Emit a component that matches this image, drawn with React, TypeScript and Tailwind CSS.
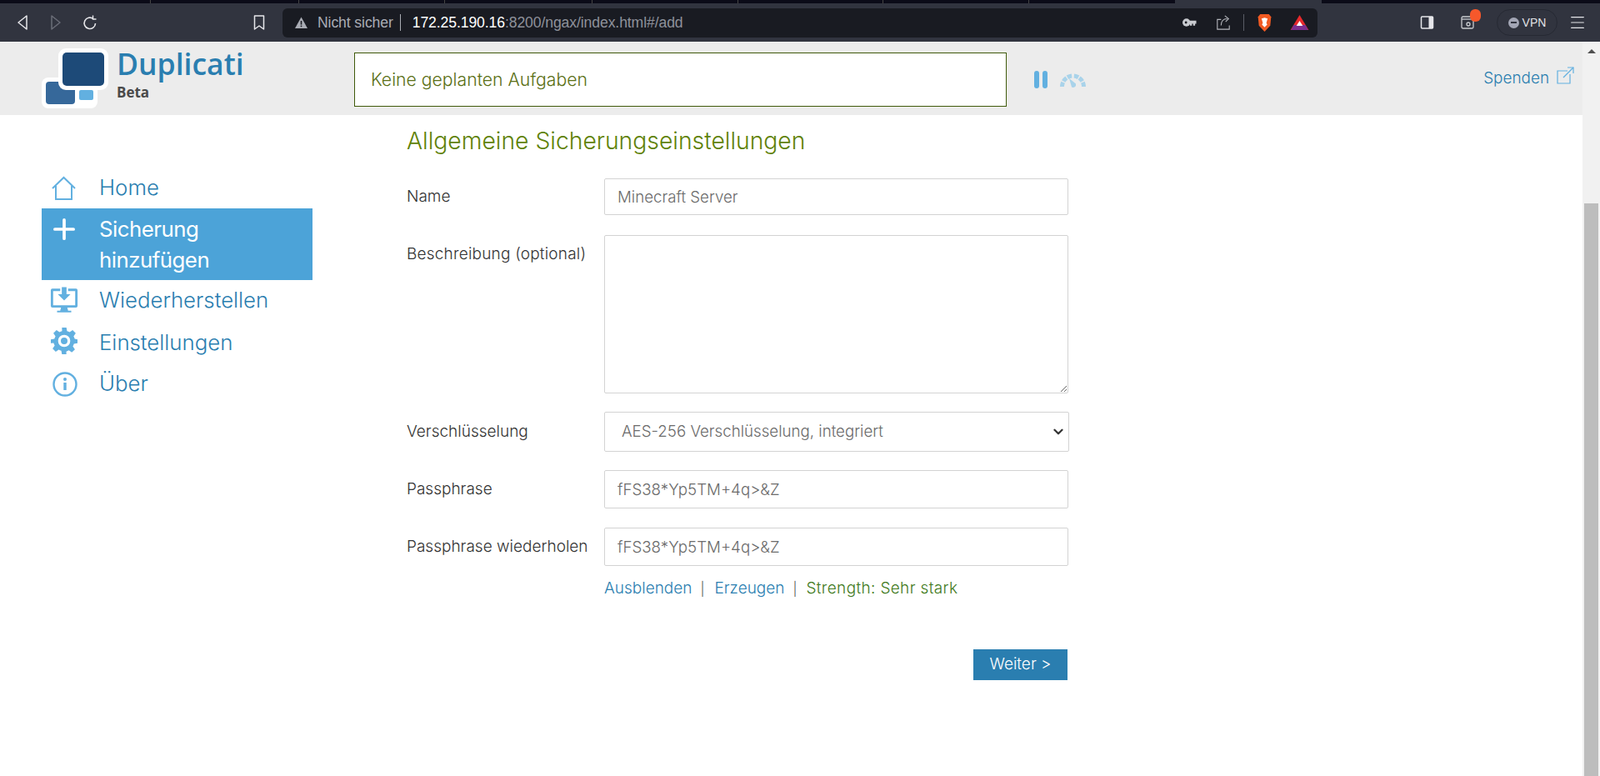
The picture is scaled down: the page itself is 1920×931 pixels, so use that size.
import { ChevronDown, Menu } from 'lucide-react';

function BrowserBar() {
    return (
        <div className="h-[50px] shrink-0 bg-[#31343f] flex flex-col font-['Liberation_Sans',sans-serif]">
            <div className="h-1 bg-[#0b0b18] flex">
                <div className="w-[181px] border-r border-[#444]" />
                <div className="w-[178px] border-r border-[#444]" />
                <div className="w-[175px] border-r border-[#444]" />
                <div className="w-[177px] border-r border-[#444]" />
                <div className="w-[175px] border-r border-[#444]" />
                <div className="w-[174px] border-r border-[#444]" />
                <div className="w-[175px] border-r border-[#444]" />
                <div className="w-[175px]" />
                <div className="w-[176px] bg-[#31343f]" />
                <div className="flex-1" />
            </div>
            <div className="flex-1 flex items-center">
                <div className="w-[304px] pl-[20px] flex items-center shrink-0">
                    <svg width="14" height="20" viewBox="0 0 14 20" fill="none" stroke="#e6e6ea" strokeWidth="1.5"><path d="M12 2 2 10l10 8z" strokeLinejoin="round" /></svg>
                    <svg width="14" height="20" viewBox="0 0 14 20" fill="none" stroke="#6a6d78" strokeWidth="1.5" className="ml-[26px]"><path d="m2 2 10 8-10 8z" strokeLinejoin="round" /></svg>
                    <svg width="18" height="20" viewBox="0 0 18 20" fill="none" stroke="#e6e6ea" strokeWidth="1.6" className="ml-[25px]"><path d="M15.500 11a6.700 6.700 0 1 1-2.500-5.400" /><path d="M12.500 1.500v4.500h4" strokeWidth="1.4" /></svg>
                </div>
                <svg width="14" height="20" viewBox="0 0 14 20" fill="none" stroke="#e6e6ea" strokeWidth="1.5" className="shrink-0"><path d="M1.500 2h11v16l-5.500-4-5.500 4z" strokeLinejoin="round" /></svg>
                <div className="ml-[21px] w-[1242px] h-[35px] rounded-[6px] bg-[#191b22] flex items-center pl-[14px] pr-[10px] text-[17.6px] tracking-[-0.1px] shrink-0">
                    <svg width="17" height="15" viewBox="0 0 16 15" fill="#a9acb4" className="shrink-0"><path d="M8 .5 15.500 14H.5z" /><rect x="7.200" y="5" width="1.600" height="4.600" fill="#191b22" /><rect x="7.200" y="10.600" width="1.600" height="1.600" fill="#191b22" /></svg>
                    <span className="ml-[11px] text-[#a9acb4]">Nicht sicher</span>
                    <span className="ml-[8px] mr-[14px] h-[20px] w-px bg-[#a9acb4]" />
                    <span className="text-white">172.25.190.16</span>
                    <span className="text-[#8e919a]">:8200/ngax/index.html#/add</span>
                    <div className="ml-auto flex items-center">
                        <svg width="17" height="12" viewBox="0 0 18 12" fill="#c9cbd0"><circle cx="5" cy="6" r="5" /><circle cx="4.400" cy="6" r="1.500" fill="#191b22" /><path d="M8 3.500h9.500v4H16V10h-2.500V7.500H12V10H9.500V7.500H8z" /></svg>
                        <svg width="18" height="20" viewBox="0 0 20 20" fill="none" stroke="#b5b7bd" strokeWidth="1.200" className="ml-[23px]"><path d="M7 6H2v13h16v-5" /><path d="M7 14c0-6 3-9 8-9" /><path d="m12 1 5 4-4 4" /></svg>
                        <span className="ml-[15px] h-[20px] w-px bg-[#5a5d66]" />
                        <svg width="21" height="23" viewBox="0 0 16 22" className="ml-[14px]"><path d="M3 1h10l2.500 3-1 10-6.500 7-6.500-7-1-10z" fill="#f15a22" /><path d="M4.500 6 8 5l3.500 1-1.500 5 1 2-3 3-3-3 1-2z" fill="#fff" /></svg>
                        <svg width="23" height="20" viewBox="0 0 18 20" className="ml-[20px]" preserveAspectRatio="none"><path d="M9 1 17.500 19H.500z" fill="#e8292c" /><path d="M3.500 13h11l2.500 6H1z" fill="#7b2f8e" /><path d="M9 8l3 6H6z" fill="#fff" /></svg>
                    </div>
                </div>
                <svg width="17" height="16" viewBox="0 0 16 16" className="ml-[123px] shrink-0"><rect x="1" y="1" width="14" height="14" rx="1" fill="none" stroke="#e6e6ea" strokeWidth="1.500" /><rect x="10" y="1" width="5" height="14" fill="#e6e6ea" /></svg>
                <div className="relative ml-[32px] w-[17px] h-[16px] shrink-0">
                    <svg width="17" height="16" viewBox="0 0 17 16" fill="none" stroke="#c9cbd0" strokeWidth="1.300"><rect x="1" y="1" width="14" height="14" rx="1.500" /><path d="M1 4h14" /><circle cx="9" cy="10" r="2" /></svg>
                    <span className="absolute left-[11px] top-[-8px] w-[13px] h-[15px] rounded-[6px] bg-[#f6582b]" />
                </div>
                <div className="ml-[26px] w-[73px] h-[32px] rounded-full border border-[#262933] flex items-center justify-center gap-[4px] shrink-0 text-[14px] text-[#e0e1e5]">
                    <span className="w-[13px] h-[13px] rounded-full bg-[#a3a6b5] flex items-center justify-center"><span className="w-[7px] h-[2px] bg-[#31343f]" /></span>
                    VPN
                </div>
                <Menu size={22} strokeWidth={1.300} color="#e6e6ea" className="ml-[13px] shrink-0" />
            </div>
        </div>
    );
}

function Logo() {
    return (
        <svg width="82" height="72" viewBox="0 0 82 72" className="shrink-0">
            <rect x="0" y="35" width="67" height="37" rx="8" fill="#fff" />
            <rect x="5" y="40" width="35" height="27" rx="4" fill="#36689a" />
            <rect x="45" y="50" width="17" height="12" rx="2" fill="#62b0e0" />
            <rect x="20" y="0" width="60" height="50" rx="9" fill="#fff" />
            <rect x="25" y="5" width="50" height="40" rx="5" fill="#1d4a78" />
        </svg>
    );
}

function Header() {
    return (
        <header className="h-[88px] bg-[#ececec] flex items-start pl-[50px] pr-[10px] shrink-0">
            <div className="mt-[8px] w-[82px]"><Logo /></div>
            <div className="ml-[8px] mt-[2px] w-[285px] font-['Open_Sans',sans-serif]">
                <div className="text-[35.5px] leading-[48px] font-semibold text-[#2a7eb0]">Duplicati</div>
                <div className="text-[17px] leading-[18px] mt-[2px] font-bold text-[#4a4a4a]">Beta</div>
            </div>
            <div className="mt-[13px] w-[783px] h-[65px] bg-white border border-[#3f5a0a] flex items-center pl-[19px] text-[21.2px] font-light text-[#5a6f14]">
                Keine geplanten Aufgaben
            </div>
            <div className="mt-[35px] ml-[33px] flex items-start">
                <span className="w-[6px] h-[21px] rounded-full bg-[#62b0e0]" />
                <span className="w-[6px] h-[21px] rounded-full bg-[#62b0e0] ml-[4px]" />
                <svg width="33" height="20" viewBox="0 0 33 20" className="ml-[14px] mt-[1px]" fill="none" stroke="#a9d3ea" strokeWidth="5">
                    <path d="M3.500 18A13 13 0 0 1 4.620 12.710" />
                    <path d="M5.240 11.500A13 13 0 0 1 8.860 7.480" />
                    <path d="M10 6.740A13 13 0 0 1 15.140 5.070" />
                    <path d="M17.860 5.070A13 13 0 0 1 23 6.740" />
                    <path d="M24.140 7.480A13 13 0 0 1 27.760 11.500" />
                    <path d="M28.380 12.710A13 13 0 0 1 29.500 18" />
                    <path d="M12 8l8 6.500a3.500 3.500 0 0 1-5 4z" fill="#a9d3ea" stroke="none" />
                </svg>
            </div>
            <div className="ml-auto mt-[30px] flex items-start text-[18.9px] leading-[28px] font-light text-[#2a7eb0]">
                Spenden
                <svg width="21" height="21" viewBox="0 0 21 21" fill="none" stroke="#62b0e0" strokeWidth="1.200" className="ml-[9px]"><path d="M13 5H1v15h15V9" /><path d="M13 1h7v7" /><path d="M20 1 8 13" /></svg>
            </div>
        </header>
    );
}

const navClass = 'flex items-start text-[#2a7eb0] text-[25.800px] leading-[37px] font-light';

function Sidebar() {
    return (
        <nav className="w-[325px] ml-[50px] mt-[67px] shrink-0">
            <a className={`${navClass} h-[45px] pt-[1px] pl-[12px]`}>
                <svg width="29" height="30" viewBox="0 0 29 30" fill="none" stroke="#62b0e0" strokeWidth="2" className="mt-[5px] shrink-0"><path d="M1 15 14.500 2 28 15" /><path d="M5 12v16h19V12" /></svg>
                <span className="ml-[28px]">Home</span>
            </a>
            <a className={`${navClass} bg-[#4ca3d8] text-white h-[86px] pt-[6px] pl-[14px] font-normal`}>
                <svg width="26" height="26" viewBox="0 0 28 28" fill="none" stroke="#fff" strokeWidth="4" strokeLinecap="round" className="mt-[6px] shrink-0"><path d="M14 2v24M2 14h24" /></svg>
                <span className="ml-[29px] tracking-[-0.5px]">Sicherung<br />hinzufügen</span>
            </a>
            <a className={`${navClass} h-[50px] pt-[5px] pl-[10px]`}>
                <svg width="34" height="33" viewBox="0 0 36 34" className="mt-[3px] mr-[25px] shrink-0"><path d="M13 2H3a2 2 0 0 0-2 2v20a2 2 0 0 0 2 2h30a2 2 0 0 0 2-2V4a2 2 0 0 0-2-2H23v3h9v18H4V5h9z" fill="#62b0e0" /><path d="M15 0h6v9h5l-8 8-8-8h5z" fill="#62b0e0" /><path d="M14 26h8l1 4h4v2H9v-2h4z" fill="#62b0e0" /></svg>
                <span>Wiederherstellen</span>
            </a>
            <a className={`${navClass} h-[49px] pt-[6px] pl-[11px]`}>
                <svg width="32" height="32" viewBox="0 0 24 24" fill="#62b0e0" className="mt-[1px] shrink-0"><path fillRule="evenodd" d="M10 0h4l.6 3.200a9 9 0 0 1 2.300 1l2.700-1.900 2.800 2.800-1.900 2.700a9 9 0 0 1 1 2.300L24 10.700v3.300l-3.200.6a9 9 0 0 1-1 2.300l1.900 2.700-2.800 2.800-2.700-1.900a9 9 0 0 1-2.300 1L14 24h-4l-.6-3.200a9 9 0 0 1-2.300-1l-2.700 1.900-2.800-2.800 1.900-2.700a9 9 0 0 1-1-2.300L0 14v-3.300l3.200-.6a9 9 0 0 1 1-2.300L2.300 5.100l2.800-2.800 2.700 1.900a9 9 0 0 1 2.300-1zM12 6.500a5.500 5.500 0 1 0 0 11 5.500 5.500 0 0 0 0-11zm0 2.500a3 3 0 1 1 0 6 3 3 0 0 1 0-6z" /></svg>
                <span className="ml-[26px]">Einstellungen</span>
            </a>
            <a className={`${navClass} h-[49px] pt-[6px] pl-[13px]`}>
                <svg width="30" height="30" viewBox="0 0 30 30" fill="none" className="mt-[5px] shrink-0"><circle cx="15" cy="15" r="13.500" stroke="#62b0e0" strokeWidth="2.400" /><circle cx="15" cy="9" r="2" fill="#62b0e0" /><path d="M15 13v9" stroke="#62b0e0" strokeWidth="3.400" /></svg>
                <span className="ml-[26px]">Über</span>
            </a>
        </nav>
    );
}

const inputClass = 'w-[557px] bg-white border border-[#d3d3d3] rounded-[2px] px-[15px] text-[18.700px] text-[#6b6b6b] font-light outline-none';
const labelClass = 'w-[237px] shrink-0 text-[19px] font-light text-[#333333]';

function Form() {
    return (
        <section className="ml-[113px] w-[800px] shrink-0">
            <h2 className="mt-[12px] text-[28.300px] leading-[38px] font-light text-[#5f8208]">Allgemeine Sicherungseinstellungen</h2>
            <div className="flex items-center mt-[26px]">
                <label className={`${labelClass} pt-[1px]`}>Name</label>
                <input readOnly value="Minecraft Server" className={`${inputClass} h-[44px]`} />
            </div>
            <div className="flex items-start mt-[24px]">
                <label className={`${labelClass} pt-[9px] tracking-[0.2px]`}>Beschreibung (optional)</label>
                <textarea readOnly className={`${inputClass} h-[190px] block`} />
            </div>
            <div className="flex items-center mt-[22px]">
                <label className={labelClass}>Verschlüsselung</label>
                <div className="relative">
                    <select className={`${inputClass} appearance-none pl-[20px] h-[48px] w-[558px] block`} defaultValue="aes">
                        <option value="aes">AES-256 Verschlüsselung, integriert</option>
                    </select>
                    <ChevronDown size={18} strokeWidth={3} color="#333333" className="absolute right-[4px] top-[15px]" />
                </div>
            </div>
            <div className="flex items-center mt-[22px]">
                <label className={labelClass}>Passphrase</label>
                <input readOnly value="fFS38*Yp5TM+4q>&Z" className={`${inputClass} h-[46px]`} />
            </div>
            <div className="flex items-center mt-[23px]">
                <label className={labelClass}>Passphrase wiederholen</label>
                <input readOnly value="fFS38*Yp5TM+4q>&Z" className={`${inputClass} h-[46px]`} />
            </div>
            <div className="ml-[237px] mt-[15px] text-[19px] font-light leading-[24px] text-[#4a4a4a]">
                <a className="text-[#2a7eb0]">Ausblenden</a>
                <span className="ml-[10px] mr-[12px] text-[16px]">|</span>
                <a className="text-[#2a7eb0]">Erzeugen</a>
                <span className="ml-[10px] mr-[11px] text-[16px]">|</span>
                <span className="text-[#3f7a1c] tracking-[0.35px]">Strength: Sehr stark</span>
            </div>
            <div className="w-[793px] flex justify-end mt-[61px]">
                <button className="w-[113px] h-[37px] bg-[#2a7eb0] text-white text-[19px] font-light">Weiter &gt;</button>
            </div>
        </section>
    );
}

function Scrollbar() {
    return (
        <div className="w-[21px] shrink-0 bg-[#f1f1f1] flex flex-col items-center">
            <span className="mt-[9px] w-0 h-0 border-l-[5px] border-r-[5px] border-b-[5px] border-l-transparent border-r-transparent border-b-[#505050]" />
            <div className="mt-[180px] w-[17px] flex-1 bg-[#bdbdbd]" />
        </div>
    );
}

export default function App() {
    return (
        <div className="h-[931px] w-[1920px] overflow-hidden flex flex-col bg-white font-['Inter',sans-serif]">
            <BrowserBar />
            <div className="flex-1 flex min-h-0">
                <div className="flex-1 flex flex-col min-w-0">
                    <Header />
                    <main className="flex flex-1">
                        <Sidebar />
                        <Form />
                    </main>
                </div>
                <Scrollbar />
            </div>
        </div>
    );
}
